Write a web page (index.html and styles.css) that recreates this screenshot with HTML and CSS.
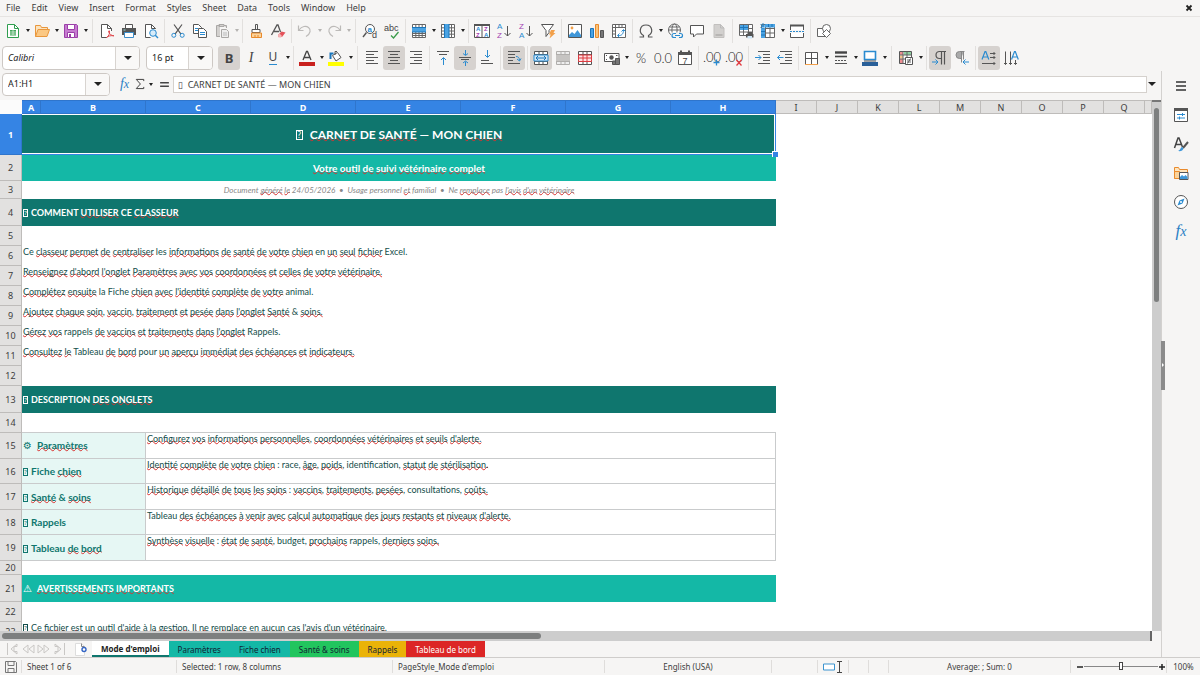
FILE: index.html
```html
<!DOCTYPE html>
<html lang="fr">
<head>
<meta charset="utf-8">
<title>Carnet de santé</title>
<link rel="stylesheet" href="styles.css">
</head>
<body>
<header class="menubar">
  <nav class="menus">
    <button>File</button><button>Edit</button><button>View</button><button>Insert</button><button>Format</button><button>Styles</button><button>Sheet</button><button>Data</button><button>Tools</button><button>Window</button><button>Help</button>
  </nav>
  <button class="close" aria-label="Close document"><svg viewBox="0 0 8 8" width="8" height="8"><path d="M1.5 1.5l5 5M6.5 1.5l-5 5" stroke="#222" stroke-width="1.8"/></svg></button>
</header>

<div class="toolbar" role="toolbar" aria-label="Standard">
  <div class="group wide">
    <button class="tool" aria-label="New"><svg viewBox="0 0 16 16"><path d="M2.500 1.500h7l4 4v9h-11z" fill="#fff" stroke="#2f9e4f"/><path d="M9.500 1.500v4h4" stroke="#2f9e4f"/><path d="M5 7h6v5.500H5z" fill="#43a85c"/><path d="M5 9h6M5 11h6M8 7v5" stroke="#fff" stroke-width=".6"/></svg></button><button class="caret" aria-label="New options"></button>
    <button class="tool" aria-label="Open"><svg viewBox="0 0 16 16"><path d="M1.500 13.500v-11h5l1 2h6v2" fill="#fce3bd" stroke="#e9973c"/><path d="M1.500 13.500l2.500-7h11.500l-2.500 7z" fill="#fbc883" stroke="#e9973c"/></svg></button><button class="caret" aria-label="Recent files"></button>
    <button class="tool" aria-label="Save"><svg viewBox="0 0 16 16"><path d="M1.500 1.500h12l1 1v12h-13z" fill="#c67bd0" stroke="#9b3fa8"/><path d="M4.500 1.500h7v5h-7z" fill="#fff" stroke="#9b3fa8"/><path d="M4.500 9.500h7v5h-7z" fill="#fff" stroke="#9b3fa8"/><path d="M6 11h2v3H6z" fill="#9b3fa8"/></svg></button><button class="caret" aria-label="Save options"></button>
  </div>
  <div class="group">
    <button class="tool" aria-label="Export as PDF"><svg viewBox="0 0 16 16"><path d="M12.500 8V5.500l-4-4h-6v13H8" fill="#fff" stroke="#555"/><path d="M8.500 1.500v4h4" stroke="#555"/><path d="M7.500 14.500c2-1 3.500-4 3-6.500-.3-1-1.200 0-.8 1 .8 2 2.800 3.800 5.300 3.800M7.500 14.500c1.500-1.500 4.500-2.200 7.500-1.700" stroke="#e0474c"/></svg></button>
    <button class="tool" aria-label="Print"><svg viewBox="0 0 16 16"><path d="M4.500 1.500h7v4h-7z" fill="#fff" stroke="#555"/><path d="M1 5h14v7H1z" fill="#555"/><path d="M3.500 9.500h9v5h-9z" fill="#fff" stroke="#3b8cc9"/><path d="M2.500 7h2" stroke="#9dd"/></svg></button>
    <button class="tool" aria-label="Print preview"><svg viewBox="0 0 16 16"><path d="M12.500 6V5.500l-4-4h-6v13h5" fill="#fff" stroke="#555"/><path d="M8.500 1.500v4h4" stroke="#555"/><circle cx="10" cy="10" r="3.300" fill="#d7ecfa" stroke="#2a8bd0"/><path d="M12.300 12.300l2.700 2.700" stroke="#2a8bd0" stroke-width="1.400"/></svg></button>
  </div>
  <div class="group">
    <button class="tool" aria-label="Cut"><svg viewBox="0 0 16 16"><path d="M4 1.500l6.800 9.300M12 1.500l-6.800 9.300" stroke="#555" stroke-width="1.200"/><circle cx="3.800" cy="12.300" r="2" stroke="#2a8bd0"/><circle cx="12.200" cy="12.300" r="2" stroke="#2a8bd0"/></svg></button>
    <button class="tool" aria-label="Copy"><svg viewBox="0 0 16 16"><path d="M1.500 1.500h5l3 3v6h-8z" fill="#fff" stroke="#555"/><path d="M3 5.500h3M3 7.500h3" stroke="#2a8bd0"/><path d="M6.500 5.500h5l3 3v6h-8z" fill="#fff" stroke="#555"/><path d="M8 9.500h5M8 11.500h5" stroke="#2a8bd0"/></svg></button>
    <button class="tool" aria-label="Paste" disabled><svg viewBox="0 0 16 16"><path d="M6 2.500H2.500v11H6M10 2.500h2.500V5M5 1.500h5v2H5z" fill="#d3d1cf" stroke="#aaa8a6"/><path d="M7.500 6.500h5l2 2v6h-7z" fill="#eee" stroke="#aaa8a6"/><path d="M9 10h4M9 12h4" stroke="#bbb"/></svg></button><button class="caret" aria-label="Paste options" disabled></button>
  </div>
  <div class="group">
    <button class="tool" aria-label="Clone formatting"><svg viewBox="0 0 16 16"><path d="M7.500 1.500h2v5h-2z" stroke="#555"/><path d="M4 6.500h8v3H4z" fill="#fff" stroke="#555"/><path d="M3.500 10v4.500h10V10z" fill="#fbd39b" stroke="#e98a2c"/><path d="M7 12v2M10 12v2" stroke="#e98a2c"/></svg></button>
    <button class="tool" aria-label="Clear formatting"><svg viewBox="0 0 16 16"><path d="M1.500 12L7 2h1l2.500 7M4 8.500h5" stroke="#555" stroke-width="1.300"/><path d="M8 12l3.500-3.500 4 1L12 14H8.500z" fill="#e4525a"/><path d="M8 12l1.500-1.500L12 13l-1 1.500H8.500z" fill="#f6b4b6"/></svg></button>
  </div>
  <div class="group wide">
    <button class="tool" aria-label="Undo" disabled><svg viewBox="0 0 16 16"><path d="M1.500 2.500v5h5M2 7c3-4 7-4.500 9.500-2.500s2.500 6-2.500 9" stroke="#bcbab8" stroke-width="1.200"/></svg></button><button class="caret" aria-label="Undo list" disabled></button>
    <button class="tool" aria-label="Redo" disabled><svg viewBox="0 0 16 16"><path d="M14.500 2.500v5h-5M14 7c-3-4-7-4.500-9.500-2.500s-2.500 6 2.500 9" stroke="#bcbab8" stroke-width="1.200"/></svg></button><button class="caret" aria-label="Redo list" disabled></button>
  </div>
  <div class="group">
    <button class="tool" aria-label="Find and replace"><svg viewBox="0 0 16 16"><circle cx="8" cy="6" r="4.500" fill="#fff" stroke="#555"/><path d="M4.500 9.500L1 14" stroke="#555" stroke-width="1.400"/><text x="5.600" y="8.500" font-size="8" font-weight="700" fill="#2a8bd0">a</text><text x="10" y="15" font-size="9" fill="#444">d</text></svg></button>
    <button class="tool" aria-label="Spelling"><svg viewBox="0 0 16 16"><text x="0" y="7.500" font-size="9" fill="#444">abc</text><path d="M7 12.500l2.500 2.500 5-6" stroke="#3a9b4a" stroke-width="1.300"/></svg></button>
  </div>
  <div class="group">
    <button class="tool" aria-label="Row"><svg viewBox="0 0 16 16"><path d="M1.500 1.500h13v13h-13zM1.500 10.500h13M4.800 1.500v13M8 1.500v13M11.200 1.500v13M1.500 12.500h13" fill="#fff" stroke="#666"/><path d="M1 5h14v4H1z" fill="#4ba3e3"/><path d="M1 4.500h14M1 9h14" stroke="#1b76bb"/></svg></button><button class="caret" aria-label="Row options"></button>
    <button class="tool" aria-label="Column"><svg viewBox="0 0 16 16"><path d="M1.500 1.500h13v13h-13zM11.500 1.500v13M1.500 4.800h13M1.500 8h13M1.500 11.200h13" fill="#fff" stroke="#666"/><path d="M5 1h4v14H5z" fill="#4ba3e3"/><path d="M4.500 1v14M9 1v14" stroke="#1b76bb"/></svg></button><button class="caret" aria-label="Column options"></button>
  </div>
  <div class="group">
    <button class="tool" aria-label="Sort"><svg viewBox="0 0 16 16"><path d="M.500 1.500h15v13H.500zM8 1.500v13" fill="#fff" stroke="#555"/><path d="M0 1h16v2H0z" fill="#555"/><g font-size="6" font-weight="700"><text x="2" y="8" fill="#2a8bd0">A</text><text x="2" y="14" fill="#a33db0">Z</text><text x="10" y="8" fill="#a33db0">Z</text><text x="10" y="14" fill="#2a8bd0">A</text></g></svg></button>
    <button class="tool" aria-label="Sort ascending"><svg viewBox="0 0 16 16"><g font-size="8"><text x="1" y="6" fill="#2a8bd0">A</text><text x="1" y="15" fill="#a33db0">Z</text></g><path d="M11.500 3v10M8.500 10l3 3 3-3" stroke="#555"/></svg></button>
    <button class="tool" aria-label="Sort descending"><svg viewBox="0 0 16 16"><g font-size="8"><text x="1" y="6" fill="#a33db0">Z</text><text x="1" y="15" fill="#2a8bd0">A</text></g><path d="M11.500 3v10M8.500 10l3 3 3-3" stroke="#555"/></svg></button>
    <button class="tool" aria-label="AutoFilter"><svg viewBox="0 0 16 16"><path d="M1.500 1.500h12L9 7.500v2l-3 4v-6z" fill="#fff" stroke="#555"/><path d="M11 7h4l-1.500 3h2L9.500 15.500l1.200-4H9z" fill="#f2a04a"/></svg></button>
  </div>
  <div class="group">
    <button class="tool" aria-label="Insert image"><svg viewBox="0 0 16 16"><path d="M1.500 1.500h13v13h-13z" fill="#fff" stroke="#555"/><path d="M2 14v-2l3-3 2.500 2 3-4 3.500 5v2z" fill="#3f97d9"/><circle cx="5" cy="5" r="1.400" fill="#f2a04a"/></svg></button>
    <button class="tool" aria-label="Insert chart"><svg viewBox="0 0 16 16"><path d="M1.500 5.500h3v9h-3z" fill="#4ba3e3" stroke="#1b76bb"/><path d="M6.500 1.500h3v13h-3z" fill="#f8c47c" stroke="#e98a2c"/><path d="M11.500 7.500h3v7h-3z" fill="#777" stroke="#555"/></svg></button>
    <button class="tool" aria-label="Insert pivot table"><svg viewBox="0 0 16 16"><path d="M1.500 1.500h13v13h-13zM1.500 4.500h13M4.500 1.500v13M8 1.500v3M11 1.500v3M1.500 8h3M1.500 11h3" fill="#fff" stroke="#666"/><path d="M7 12.500c4 .5 5.500-2 5.500-5.500M10.500 8.500l2-2 2 2M8.500 10.500l-2 2 2 2" stroke="#2a8bd0"/></svg></button>
  </div>
  <div class="group">
    <button class="tool" aria-label="Special character"><svg viewBox="0 0 16 16"><path d="M1.500 14h4v-1.500C3 11 2 9 2.300 6.800 2.700 4 5 2 8 2s5.300 2 5.700 4.800C14 9 13 11 10.500 12.500V14h4" stroke="#555" stroke-width="1.200"/></svg></button><button class="caret" aria-label="Recent characters"></button>
    <button class="tool" aria-label="Hyperlink"><svg viewBox="0 0 16 16"><circle cx="7.500" cy="7" r="6" stroke="#666" fill="#fff"/><ellipse cx="7.500" cy="7" rx="2.600" ry="6" stroke="#666"/><path d="M1.500 7h12M2.500 4h10" stroke="#666"/><path d="M4 9.500h12v6H4z" fill="#f5f4f2"/><path d="M9 10.500H7a2 2 0 000 4h2M12 10.500h1.500a2 2 0 010 4H12M8 12.500h5" stroke="#2a8bd0" stroke-width="1.200"/></svg></button>
    <button class="tool" aria-label="Comment"><svg viewBox="0 0 16 16"><path d="M1.500 2.500h13v8.500h-7L4.500 14v-3h-3z" fill="#fff" stroke="#555"/></svg></button>
    <button class="tool" aria-label="Headers and footers" disabled><svg viewBox="0 0 16 16"><path d="M3 1.500h6.500l3.500 3.500v9.500H3z" fill="#d2d0ce" stroke="#c2c0be"/><path d="M4.500 11h7v2h-7z" fill="#b8b6b4"/><path d="M9.500 1.500v3.500H13" stroke="#bbb"/></svg></button>
  </div>
  <div class="group">
    <button class="tool" aria-label="Define print area"><svg viewBox="0 0 16 16"><path d="M1.500 1.500h13v11h-13zM1.500 5.500h13M1.500 9h13M5.500 1.500v11M10.500 1.500v11" fill="#fff" stroke="#666"/><path d="M2 2h8v5H2z" fill="#4ba3e3"/><path d="M2 4.500h8M5.500 2v5" stroke="#1b76bb"/><path d="M8 11h7.500v3.500H8zM9.500 9h4.500v2H9.500z" fill="#555"/><path d="M9.500 13h4.500v2.500H9.500z" fill="#cfe6f7"/></svg></button>
    <button class="tool" aria-label="Freeze rows and columns"><svg viewBox="0 0 16 16"><path d="M1.500 1.500h13v13h-13zM1.500 5.500h13M1.500 10h13M5.500 1.500v13M10 1.500v13" fill="#fff" stroke="#666"/><path d="M1 5h4v10H1zM5 1h10v3.500H5z" fill="#4ba3e3"/><path d="M1 8.500h4M1 12h4M8.500 1v3M12 1v3" stroke="#1b76bb"/><path d="M3 0v6M.500 1.500l5 3M5.500 1.500l-5 3" stroke="#2a8bd0"/></svg></button><button class="caret" aria-label="Freeze options"></button>
    <button class="tool" aria-label="Split window"><svg viewBox="0 0 16 16"><path d="M1.500 7V2.500h13V7M1.500 10v4.500h13V10" fill="#fff" stroke="#555"/><path d="M1 1.500h14v2H1z" fill="#555"/><path d="M1 8.500h14" stroke="#2a8bd0" stroke-dasharray="2 1"/></svg></button>
  </div>
  <div class="group last">
    <button class="tool" aria-label="Show draw functions"><svg viewBox="0 0 16 16"><path d="M1.500 5.500h8v8h-8z" fill="#fff" stroke="#666"/><circle cx="10.500" cy="5.500" r="4" fill="#fff" stroke="#666"/><path d="M10.500 6.500l4 4-4 4-4-4z" fill="#fff" stroke="#666"/></svg></button>
  </div>
</div>

<div class="toolbar" role="toolbar" aria-label="Formatting">
  <div class="combo font-name"><input aria-label="Font name" value="Calibri"><button aria-label="Choose font"></button></div>
  <div class="combo font-size"><input aria-label="Font size" value="16 pt"><button aria-label="Choose size"></button></div>
  <div class="group">
    <button class="tool on" aria-label="Bold" aria-pressed="true"><b class="glyph">B</b></button>
    <button class="tool" aria-label="Italic"><i class="glyph serif">I</i></button>
    <button class="tool" aria-label="Underline"><span class="glyph under">U</span></button><button class="caret" aria-label="Underline styles"></button>
  </div>
  <div class="group wide">
    <button class="tool" aria-label="Font color"><svg viewBox="0 0 16 16"><path d="M4 10L7.500 1.500h1L12 10M5.300 7.500h5.400" stroke="#444" stroke-width="1.300"/><path d="M0 12h16v4H0z" fill="#c9211e"/></svg></button><button class="caret" aria-label="Font colors"></button>
    <button class="tool" aria-label="Background color"><svg viewBox="0 0 16 16"><path d="M2.500 9V3.500h3" stroke="#1b76bb" stroke-width="2"/><path d="M4.500 5.500l5-3 3.500 5-5 3.500z" fill="#fff" stroke="#555"/><path d="M7 5V1.500h2" stroke="#555"/><path d="M0 12h16v4H0z" fill="#ff0"/></svg></button><button class="caret" aria-label="Background colors"></button>
  </div>
  <div class="group">
    <button class="tool" aria-label="Align left"><svg viewBox="0 0 16 16"><path d="M2 1.500h12M2 4.500h8M2 7.500h12M2 10.500h8M2 13.500h12" stroke="#555"/></svg></button>
    <button class="tool on" aria-label="Center" aria-pressed="true"><svg viewBox="0 0 16 16"><path d="M2 1.500h12M4 4.500h8M2 7.500h12M4 10.500h8M2 13.500h12" stroke="#555"/></svg></button>
    <button class="tool" aria-label="Align right"><svg viewBox="0 0 16 16"><path d="M2 1.500h12M6 4.500h8M2 7.500h12M6 10.500h8M2 13.500h12" stroke="#555"/></svg></button>
  </div>
  <div class="group">
    <button class="tool" aria-label="Align top"><svg viewBox="0 0 16 16"><path d="M2 1.500h12M4 4.500h8" stroke="#555"/><path d="M8.500 15V8M6 10l2.500-2.500L11 10" stroke="#2a8bd0"/></svg></button>
    <button class="tool on" aria-label="Center vertically" aria-pressed="true"><svg viewBox="0 0 16 16"><path d="M2 7.500h12M4 9.500h8" stroke="#555"/><path d="M8.500 0v5M6 3.500l2.500 2 2.500-2M8.500 16v-4.500M6 13l2.500-2 2.500 2" stroke="#2a8bd0"/></svg></button>
    <button class="tool" aria-label="Align bottom"><svg viewBox="0 0 16 16"><path d="M2 13.500h12M2 10.500h8" stroke="#555"/><path d="M8.500 0v7M6 5l2.500 2.500L11 5" stroke="#2a8bd0"/></svg></button>
  </div>
  <div class="group">
    <button class="tool on" aria-label="Wrap text" aria-pressed="true"><svg viewBox="0 0 16 16"><path d="M2 1.500h12M2 4.500h7M2 7.500h7M2 10.500h5M2 13.500h12" stroke="#555"/><path d="M10 6.500c2 0 3.500 1 3.500 4M11 9l2.500 2 1.500-2.500" stroke="#2a8bd0"/></svg></button>
  </div>
  <div class="group">
    <button class="tool on" aria-label="Merge and center" aria-pressed="true"><svg viewBox="0 0 16 16"><path d="M1.500 1.500h13v13h-13zM1.500 4.500h13M1.500 11.500h13M6 1.500v3M10 1.500v3M6 11.500v3M10 11.500v3" fill="#fff" stroke="#555"/><path d="M1 5h14v6H1z" fill="#cfe6f7" stroke="#2a8bd0"/><path d="M3 8h10M5 6L3 8l2 2M11 6l2 2-2 2" stroke="#1b76bb"/></svg></button>
    <button class="tool" aria-label="Merge cells" disabled><svg viewBox="0 0 16 16"><path d="M1.500 1.500h13v13h-13zM1.500 4.500h13M1.500 11.500h13M6 1.500v3M10 1.500v3M6 11.500v3M10 11.500v3" fill="#eee" stroke="#b0aeac"/><path d="M1 5h14v6H1z" fill="#c6c4c2"/></svg></button>
    <button class="tool" aria-label="Unmerge cells"><svg viewBox="0 0 16 16"><path d="M1.500 1.500h13v13h-13zM1.500 4.500h13M1.500 11.500h13M6 1.500v3M10 1.500v3M6 11.500v3M10 11.500v3" fill="#fff" stroke="#555"/><path d="M1.500 5h13v6.500h-13zM6 5v6M10 5v6M1.500 8h13" fill="#fde3e3" stroke="#dc3b41"/></svg></button>
  </div>
  <div class="group">
    <button class="tool" aria-label="Currency"><svg viewBox="0 0 16 16"><path d="M.500 3.500h14.500v8H.500z" fill="#fff" stroke="#555"/><circle cx="7.500" cy="7.500" r="2.200" fill="#555"/><path d="M2 5.500h1M2 9.500h1M12 5.500h1.500" stroke="#555"/><path d="M8.500 11h3v3.500h-3zM11.500 8.500h4v6h-4z" fill="#777" stroke="#555"/></svg></button><button class="caret" aria-label="Currency formats"></button>
    <button class="tool" aria-label="Percent"><span class="glyph light">%</span></button>
    <button class="tool" aria-label="Number"><span class="glyph light">0.0</span></button>
    <button class="tool" aria-label="Date"><svg viewBox="0 0 16 16"><path d="M1.500 2.500h13v12h-13z" fill="#fff" stroke="#555"/><path d="M1 2h14v3H1zM3 .500h2V3H3zM11 .500h2V3h-2z" fill="#555"/><text x="5.500" y="13.500" font-size="9" fill="#444">7</text></svg></button>
  </div>
  <div class="group wide">
    <button class="tool" aria-label="Add decimal place"><svg viewBox="0 0 16 16"><text class="digits" x="-1" y="12" font-size="13">.00</text><path d="M12.500 9.500v6M9.500 12.500h6" stroke="#2a8bd0" stroke-width="1.300"/></svg></button>
    <button class="tool" aria-label="Delete decimal place"><svg viewBox="0 0 16 16"><text class="digits" x="-1" y="12" font-size="13">.00</text><path d="M10.500 10l5 5.500M15.500 10l-5 5.500" stroke="#e23b41" stroke-width="1.300"/></svg></button>
  </div>
  <div class="group">
    <button class="tool" aria-label="Increase indent"><svg viewBox="0 0 16 16"><path d="M3 1.500h12M8 4.500h7M8 7.500h7M8 10.500h7M3 13.500h12" stroke="#555"/><path d="M0 7.500h6M3.500 5L6 7.500 3.500 10" stroke="#2a8bd0"/></svg></button>
    <button class="tool" aria-label="Decrease indent"><svg viewBox="0 0 16 16"><path d="M3 1.500h12M8 4.500h7M8 7.500h7M8 10.500h7M3 13.500h12" stroke="#555"/><path d="M.500 7.500h6M3 5L.500 7.500 3 10" stroke="#2a8bd0"/></svg></button>
  </div>
  <div class="group wide">
    <button class="tool" aria-label="Borders"><svg viewBox="0 0 16 16"><path d="M1.500 2.500h12v12h-12zM7.500 2.500v12M1.500 8.500h12" fill="#fff" stroke="#555"/><path d="M1 14.500h13" stroke="#f2a04a"/></svg></button><button class="caret" aria-label="Border choices"></button>
    <button class="tool" aria-label="Border style"><svg viewBox="0 0 16 16"><path d="M2 2.500h12" stroke="#444" stroke-width="2.400"/><path d="M2 6.500h12" stroke="#444" stroke-width="1.600"/><path d="M2 10.500h12" stroke="#555" stroke-dasharray="2 1"/><path d="M2 13.500h12" stroke="#555"/></svg></button><button class="caret" aria-label="Border styles"></button>
    <button class="tool" aria-label="Border color"><svg viewBox="0 0 16 16"><path d="M2.500 1.500h11v8h-11z" fill="#fff" stroke="#2a8bd0" stroke-width="1.600"/><path d="M2 11h12" stroke="#555"/><path d="M0 12h16v4H0z" fill="#2a6099"/></svg></button><button class="caret" aria-label="Border colors"></button>
  </div>
  <div class="group">
    <button class="tool" aria-label="Conditional formatting"><svg viewBox="0 0 16 16"><path d="M1.500 1.500h12v12h-12z" fill="#fff" stroke="#555"/><path d="M2 2h3v3H2zM2 9h3v4H2z" fill="#ee8f93"/><path d="M6 2h7v3H6z" fill="#8fd0a0"/><path d="M2 5.500h3v3H2z" fill="#f7c48d"/><path d="M1.500 5h12M1.500 9h12M5 1.500v12M9 1.500v12" stroke="#666"/><path d="M7.500 7.500h7v7h-7z" fill="#fff" stroke="#555"/><path d="M9 10h4M9 12h4M12.500 8.500l-3 5" stroke="#444" stroke-width=".8"/></svg></button><button class="caret" aria-label="Conditional options"></button>
  </div>
  <div class="group">
    <button class="tool on" aria-label="Left to right" aria-pressed="true"><svg viewBox="0 0 16 16"><path d="M14 1.500H7.500a3.500 3.500 0 000 7H9M9.500 1.500v13M12.500 1.500v13" stroke="#555" stroke-width="1.200"/><path d="M0 12h6M3.500 9.500L6 12l-2.500 2.500" stroke="#2a8bd0"/></svg></button>
    <button class="tool" aria-label="Right to left"><svg viewBox="0 0 16 16"><path d="M10 1.500H5.500a3.500 3.500 0 000 7H7z" fill="#aaa"/><path d="M10.500 1.500h-5a3.500 3.500 0 000 7H7M7.500 1.500v11M9.500 1.500v8" stroke="#888"/><path d="M9 12h6M11.500 9.500L9 12l2.500 2.500" stroke="#2a8bd0"/></svg></button>
  </div>
  <div class="group last">
    <button class="tool on" aria-label="Text left to right" aria-pressed="true"><svg viewBox="0 0 16 16"><path d="M1 9.500L4 1.500h.8l3 8M2 7h4.800" stroke="#2a8bd0" stroke-width="1.200"/><path d="M9 3.500h5M9 7.500h5M1 13.500h13M12.500 2l1.500 1.500L12.500 5M12.500 6L14 7.500 12.500 9M12.500 12l1.500 1.500-1.500 1.500" stroke="#555"/></svg></button>
    <button class="tool" aria-label="Text top to bottom"><svg viewBox="0 0 16 16"><path d="M8.500 9.500l3-8h.8l3 8M9.500 7h4.800" stroke="#2a8bd0" stroke-width="1.200"/><path d="M2.500 1.500v13M7.500 1.500v13M12.500 10v4.500M1 13l1.500 1.500L4 13M6 13l1.500 1.500L9 13M11 13l1.500 1.500L14 13" stroke="#555"/></svg></button>
  </div>
</div>

<main class="work">
  <section class="document">
    <div class="formula-bar">
      <div class="combo name-box"><input aria-label="Name box" value="A1:H1"><button aria-label="Choose range"></button></div>
      <button class="fx" aria-label="Function wizard"><i>f<small>x</small></i></button>
      <button class="sigma" aria-label="Select function"><svg viewBox="0 0 12 14" width="10" height="12"><path d="M10.500 3.500v-2H1.500L6.500 7l-5 5.500h9v-2" stroke="#444" stroke-width="1.200"/></svg></button><button class="caret" aria-label="Functions"></button>
      <button class="equals" aria-label="Formula"><svg viewBox="0 0 10 8" width="9" height="7"><path d="M0 2h10M0 6h10" stroke="#444" stroke-width="1.800"/></svg></button>
      <input class="formula" aria-label="Input line" value="▯  CARNET DE SANTÉ — MON CHIEN">
      <button class="expand" aria-label="Expand formula bar"></button>
    </div>
    <div class="sheet-area">
      <div class="sheet-view">
        <table class="sheet">
          <colgroup><col class="c-head"><col class="c-a"><col class="c-main" span="7"><col class="c-std" span="9"><col></colgroup>
          <thead><tr><th class="corner"></th><th class="sel">A</th><th class="sel">B</th><th class="sel">C</th><th class="sel">D</th><th class="sel">E</th><th class="sel">F</th><th class="sel">G</th><th class="sel">H</th><th>I</th><th>J</th><th>K</th><th>L</th><th>M</th><th>N</th><th>O</th><th>P</th><th>Q</th><th></th></tr></thead>
          <tbody>
            <tr class="h41"><th class="sel">1</th><td class="title" colspan="8"><span class="tofu">?</span><u>CARNET</u> DE <u>SANTÉ</u> — MON <u>CHIEN</u></td></tr>
            <tr class="h26"><th>2</th><td class="subtitle" colspan="8"><u>Votre</u> <u>outil</u> <u>de</u> <u>suivi</u> <u>vétérinaire</u> <u>complet</u></td></tr>
            <tr class="h18"><th>3</th><td class="note" colspan="8">Document <u>généré</u> <u>le</u> 24/05/2026 &nbsp;•&nbsp; Usage personnel <u>et</u> familial &nbsp;•&nbsp; Ne <u>remplace</u> pas <u>l'avis</u> <u>d'un</u> <u>vétérinaire</u></td></tr>
            <tr class="h27"><th>4</th><td class="band" colspan="8"><span class="tofu">?</span>COMMENT <u>UTILISER</u> CE <u>CLASSEUR</u></td></tr>
            <tr class="h20"><th>5</th><td colspan="8"></td></tr>
            <tr class="h20"><th>6</th><td colspan="8">Ce <u>classeur</u> <u>permet</u> <u>de</u> <u>centraliser</u> les <u>informations</u> <u>de</u> <u>santé</u> <u>de</u> <u>votre</u> <u>chien</u> en <u>un</u> <u>seul</u> <u>fichier</u> Excel.</td></tr>
            <tr class="h20"><th>7</th><td colspan="8"><u>Renseignez</u> <u>d'abord</u> <u>l'onglet</u> <u>Paramètres</u> <u>avec</u> <u>vos</u> <u>coordonnées</u> <u>et</u> <u>celles</u> <u>de</u> <u>votre</u> <u>vétérinaire.</u></td></tr>
            <tr class="h20"><th>8</th><td colspan="8"><u>Complétez</u> <u>ensuite</u> la Fiche <u>chien</u> <u>avec</u> <u>l'identité</u> <u>complète</u> <u>de</u> <u>votre</u> animal.</td></tr>
            <tr class="h20"><th>9</th><td colspan="8"><u>Ajoutez</u> <u>chaque</u> <u>soin</u>, <u>vaccin</u>, <u>traitement</u> <u>et</u> <u>pesée</u> <u>dans</u> <u>l'onglet</u> <u>Santé</u> &amp; <u>soins.</u></td></tr>
            <tr class="h20"><th>10</th><td colspan="8"><u>Gérez</u> <u>vos</u> rappels <u>de</u> <u>vaccins</u> <u>et</u> <u>traitements</u> <u>dans</u> <u>l'onglet</u> Rappels.</td></tr>
            <tr class="h20"><th>11</th><td colspan="8"><u>Consultez</u> <u>le</u> Tableau <u>de</u> <u>bord</u> pour <u>un</u> <u>aperçu</u> <u>immédiat</u> <u>des</u> <u>échéances</u> <u>et</u> <u>indicateurs.</u></td></tr>
            <tr class="h20"><th>12</th><td colspan="8"></td></tr>
            <tr class="h27"><th>13</th><td class="band" colspan="8"><span class="tofu">?</span>DESCRIPTION <u>DES</u> <u>ONGLETS</u></td></tr>
            <tr class="h20"><th>14</th><td class="above-box" colspan="8"></td></tr>
            <tr class="h26"><th>15</th><td class="label" colspan="2"><span class="symbol">⚙</span><u>Paramètres</u></td><td class="desc" colspan="6"><u>Configurez</u> <u>vos</u> <u>informations</u> <u>personnelles</u>, <u>coordonnées</u> <u>vétérinaires</u> <u>et</u> <u>seuils</u> <u>d'alerte.</u></td></tr>
            <tr class="h25"><th>16</th><td class="label" colspan="2"><span class="tofu">?</span>Fiche <u>chien</u></td><td class="desc" colspan="6"><u>Identité</u> <u>complète</u> <u>de</u> <u>votre</u> <u>chien</u> : race, <u>âge</u>, <u>poids</u>, identification, <u>statut</u> <u>de</u> <u>stérilisation.</u></td></tr>
            <tr class="h26"><th>17</th><td class="label" colspan="2"><span class="tofu">?</span><u>Santé</u> &amp; <u>soins</u></td><td class="desc" colspan="6"><u>Historique</u> <u>détaillé</u> <u>de</u> <u>tous</u> <u>les</u> <u>soins</u> : <u>vaccins</u>, <u>traitements</u>, <u>pesées</u>, consultations, <u>coûts.</u></td></tr>
            <tr class="h25"><th>18</th><td class="label" colspan="2"><span class="tofu">?</span>Rappels</td><td class="desc" colspan="6">Tableau <u>des</u> <u>échéances</u> <u>à</u> <u>venir</u> <u>avec</u> <u>calcul</u> <u>automatique</u> <u>des</u> <u>jours</u> <u>restants</u> <u>et</u> <u>niveaux</u> <u>d'alerte.</u></td></tr>
            <tr class="h26"><th>19</th><td class="label" colspan="2"><span class="tofu">?</span>Tableau <u>de</u> <u>bord</u></td><td class="desc" colspan="6"><u>Synthèse</u> <u>visuelle</u> : <u>état</u> <u>de</u> <u>santé</u>, budget, <u>prochains</u> rappels, <u>derniers</u> <u>soins.</u></td></tr>
            <tr class="h14"><th>20</th><td colspan="8"></td></tr>
            <tr class="h27"><th>21</th><td class="band light" colspan="8"><span class="symbol">⚠</span><u>AVERTISSEMENTS</u> <u>IMPORTANTS</u></td></tr>
            <tr class="h20"><th>22</th><td colspan="8"></td></tr>
            <tr class="h20"><th>23</th><td colspan="8"><span class="tofu">?</span>Ce <u>fichier</u> <u>est</u> <u>un</u> <u>outil</u> <u>d'aide</u> <u>à</u> <u>la</u> <u>gestion.</u> <u>Il</u> <u>ne</u> <u>remplace</u> en <u>aucun</u> <u>cas</u> <u>l'avis</u> <u>d'un</u> <u>vétérinaire.</u></td></tr>
          </tbody>
        </table>
      </div>
      <div class="vscroll"><div class="thumb"></div></div>
      <div class="hscroll"><div class="thumb"></div></div>
    </div>
    <div class="tabs">
      <div class="tab-nav">
        <button aria-label="First sheet" disabled><svg viewBox="0 0 14 12"><path d="M2.500 0v12M12 1L6 6l6 5V8.500H9v-5h3z"/></svg></button>
        <button aria-label="Previous sheet" disabled><svg viewBox="0 0 14 12"><path d="M7 2L2 6l5 4zM13 2L8 6l5 4z"/></svg></button>
        <button aria-label="Next sheet" disabled><svg viewBox="0 0 14 12"><path d="M1 2l5 4-5 4zM7 2l5 4-5 4z"/></svg></button>
        <button aria-label="Last sheet" disabled><svg viewBox="0 0 14 12"><path d="M11.500 0v12M2 1l6 5-6 5V8.500h3v-5H2z"/></svg></button>
      </div>
      <button class="add-sheet" aria-label="Add sheet"><svg viewBox="0 0 14 14" width="14" height="14"><path d="M1.500 1.500h6l3 3v9h-9z" fill="#fff" stroke="#ddd"/><path d="M7.500 1.500v3h3" stroke="#888"/><circle cx="10" cy="7.500" r="2" fill="#fff" stroke="#3465c4" stroke-width="1.400"/></svg></button>
      <button class="tab active">Mode d'emploi</button><button class="tab teal">Paramètres</button><button class="tab teal">Fiche chien</button><button class="tab green">Santé &amp; soins</button><button class="tab amber">Rappels</button><button class="tab red">Tableau de bord</button>
    </div>
  </section>
  <aside class="sidebar">
    <button class="handle" aria-label="Toggle sidebar"></button>
    <button aria-label="Sidebar settings"><svg viewBox="0 0 16 16"><path d="M3 4h10M3 8h10M3 12h10" stroke="#333" stroke-width="1.500"/></svg></button>
    <button aria-label="Properties"><svg viewBox="0 0 16 16"><path d="M1.500 1.500h13v13h-13z" fill="#fff" stroke="#555"/><path d="M1 1h14v3H1z" fill="#555"/><path d="M4 7.500h8M4 11h8M9.500 6v3M6.500 9.500v3" stroke="#2a8bd0"/></svg></button>
    <button aria-label="Styles"><svg viewBox="0 0 16 16"><path d="M1.500 12L5 2h1l3.500 9M3 8.500h5" stroke="#444" stroke-width="1.500"/><path d="M15 6l-5 6" stroke="#555" stroke-width="2"/><path d="M5 15c3 .5 5-.5 5.500-2.500L9 11c-1.500.5-1.500 3-4 4z" fill="#3f97d9"/></svg></button>
    <button aria-label="Gallery"><svg viewBox="0 0 16 16"><path d="M1.500 13.500v-11h4l1 2h8v3" fill="#fde4bd" stroke="#e98a2c"/><path d="M1.500 13.500V6.500h5v7z" fill="#fbd39b" stroke="#e98a2c"/><path d="M6.500 7.500h8.500v7H6.500z" fill="#fff" stroke="#555"/><path d="M7 14v-2l2-2 2 1.500 1.500-1.500 2 2v2z" fill="#3f97d9"/></svg></button>
    <button aria-label="Navigator"><svg viewBox="0 0 16 16"><circle cx="8" cy="8" r="6.500" fill="#fff" stroke="#555"/><path d="M11.500 4.500L9.500 9.500l-5 2 2-5z" fill="#2a8bd0"/><circle cx="8" cy="8" r="1" fill="#fff"/></svg></button>
    <button class="fx" aria-label="Functions"><i>f<small>x</small></i></button>
  </aside>
</main>

<footer class="status">
  <span class="cell center"><svg viewBox="0 0 12 12" width="12" height="12"><path d="M.500.500h10l1 1v10H.500zM3 .500h6v4H3zM3 7.500h6v4H3z" stroke="#777"/></svg></span>
  <span class="cell">Sheet 1 of 6</span>
  <span class="cell">Selected: 1 row, 8 columns</span>
  <span class="cell">PageStyle_Mode d'emploi</span>
  <span class="cell center">English (USA)</span>
  <span class="cell"></span>
  <span class="cell center"><svg viewBox="0 0 20 12" width="20" height="12"><path d="M.500 3h11v6H.500z" fill="#fff" stroke="#3b93cf"/><path d="M14 .500h5M16.500 1v10M14 11.500h5" stroke="#444"/></svg></span>
  <span class="cell"></span>
  <span class="cell"></span>
  <span class="cell center">Average: ; Sum: 0</span>
  <span class="cell zoom"><button aria-label="Zoom out"><svg viewBox="0 0 8 8" width="8" height="8"><path d="M1 4h6" stroke="#222" stroke-width="1.500"/></svg></button><input type="range" min="0" max="100" value="50" aria-label="Zoom"><button aria-label="Zoom in"><svg viewBox="0 0 8 8" width="8" height="8"><path d="M1 4h6M4 1v6" stroke="#222" stroke-width="1.500"/></svg></button></span>
  <span class="cell center">100%</span>
</footer>
</body>
</html>
```
FILE: styles.css
```css
* { box-sizing: border-box; }
body {
  margin: 0;
  height: 100vh;
  display: flex;
  flex-direction: column;
  overflow: hidden;
  background: #f6f5f4;
  color: #3d3d3d;
  font: 9px/12px "Noto Sans", sans-serif;
}
button, input { font: inherit; color: inherit; margin: 0; padding: 0; border: 0; background: none; }
svg { display: block; fill: none; overflow: visible; }
svg text { font-family: "Liberation Sans", sans-serif; }

.menubar { flex: none; height: 17px; display: flex; align-items: center; justify-content: space-between; padding: 0 7px 0 6px; border-bottom: 1px solid #e6e4e2; }
.menus { display: flex; gap: 11px; }

.toolbar { flex: none; height: 27px; display: flex; align-items: center; padding-left: 2px; }
.group { display: flex; align-items: center; padding-right: 2px; margin-right: 2px; border-right: 1px solid #e2e0de; }
.group.wide { padding-right: 3px; margin-right: 3px; }
.group.last { border-right: 0; }
.tool { width: 22px; height: 24px; display: grid; place-items: center; border-radius: 3px; }
.tool svg { width: 16px; height: 16px; }
.tool.on { background: #d6d2cf; }
.caret { width: 7px; height: 12px; display: grid; place-items: center; }
.caret::before, .combo button::before, .expand::before { content: ""; border: 2px solid transparent; border-top: 3px solid #222; border-bottom: 0; }
.caret:disabled::before { border-top-color: #b5b3b1; }
.glyph { font-size: 13px; line-height: 16px; color: #444; }
.glyph.serif { font-family: "Liberation Serif", serif; font-size: 14px; }
.glyph.under { border-bottom: 1px solid #2a8bd0; line-height: 14px; font-size: 12px; }
.glyph.light { font-family: Lato, sans-serif; font-weight: 300; color: #222; }
svg .digits { font-family: Lato, sans-serif; font-weight: 300; fill: #222; }

.combo { display: flex; height: 24px; background: #fff; border: 1px solid #cdc8c4; border-radius: 4px; overflow: hidden; }
.combo input { flex: 1; min-width: 0; padding-left: 5px; color: #222; }
.combo button { width: 24px; display: grid; place-items: center; background: #f9f8f7; border-left: 1px solid #d8d4d0; }
.combo button::before, .expand::before { border-width: 4px 4px 0; }
.font-name { width: 138px; margin-right: 6px; }
.font-name input { font-style: italic; }
.font-size { width: 67px; margin-right: 5px; }

.work { flex: 1; min-height: 0; display: flex; border-bottom: 1px solid #cfcdcb; }
.document { flex: 1; min-width: 0; display: flex; flex-direction: column; border-right: 1px solid #d3d1cf; }
.formula-bar { flex: none; height: 29px; display: flex; align-items: center; padding: 0 4px 3px 2px; }
.name-box { width: 108px; margin-right: 7px; height: 23px; }
.fx { color: #2a7fc4; font: 14px/16px "Liberation Serif", serif; }
.fx small { font-size: 12px; }
.formula-bar .fx { width: 15px; }
.sigma { width: 15px; padding-left: 3px; }
.equals { width: 9px; margin: 0 4px 0 6px; }
.formula { flex: 1; min-width: 0; height: 17px; padding-left: 4px; background: #fff; border: 1px solid #d5d1cd; }
.expand { width: 10px; display: grid; place-items: center; }

.sheet-area { flex: 1; min-height: 0; display: grid; grid-template: minmax(0, 1fr) 10px / minmax(0, 1fr) 9px; }
.sheet-view { overflow: hidden; background: #fff; }
.sheet { width: 100%; table-layout: fixed; border-collapse: separate; border-spacing: 0; }
.c-head { width: 22px; }
.c-a { width: 19px; }
.c-main { width: 105px; }
.c-std { width: 41px; }
.sheet th { padding: 1px 0 0; font-weight: 400; background: #e2e1e0; border: 0 solid #bebcba; border-width: 0 1px 1px 0; }
.sheet thead th { height: 14px; padding: 0; line-height: 11px; border-top-width: 1px; }
.sheet thead .corner { background: #fbfbfb; border-color: #fbfbfb; }
.sheet th.sel { background: #3584e4; color: #fff; font-weight: 700; border-color: #2f75cc; }
.sheet td { padding: 0 1px; vertical-align: top; white-space: nowrap; font-family: Lato, sans-serif; color: #134e4a; }
.sheet u { text-decoration: underline wavy #d8322f 1px; text-decoration-skip-ink: none; text-underline-offset: -2px; }
.h14 { height: 14px; } .h18 { height: 18px; } .h20 { height: 20px; } .h25 { height: 25px; }
.h26 { height: 26px; } .h27 { height: 27px; } .h41 { height: 41px; }
.tofu { display: inline-block; width: 5px; height: 8px; margin-right: 3px; border: 1px solid; font: 6px/6px "Noto Sans", sans-serif; text-align: center; vertical-align: 1px; }
.sheet .title, .sheet .subtitle, .sheet .band { color: #fff; font-weight: 700; vertical-align: middle; background: #0f766e; }
.sheet .title { position: relative; text-align: center; font-size: 12px; line-height: 16px; box-shadow: inset -1px -1px #3584e4, inset -2px -2px #fff, inset 0 1px #fff; }
.title::after { content: ""; position: absolute; right: -2px; bottom: -2px; width: 5px; height: 5px; background: #3584e4; border: 1px solid #fff; border-width: 1px 0 0 1px; }
.title .tofu { width: 7px; height: 10px; margin-right: 7px; font-size: 8px; line-height: 8px; }
.sheet .subtitle { text-align: center; font-size: 10px; background: #14b8a6; }
.sheet .note { text-align: center; font-style: italic; font-size: 8px; color: #888; vertical-align: middle; }
.sheet .band.light { background: #14b8a6; }
.sheet .above-box { border-bottom: 1px solid #c9cbcc; }
.sheet .label { vertical-align: middle; font-size: 10px; font-weight: 700; color: #0f766e; background: #e6f7f4; border: 0 solid #c9cbcc; border-width: 0 1px 1px 0; }
.sheet .desc { border: 0 solid #c9cbcc; border-width: 0 1px 1px 0; }
.symbol { margin-right: 5px; font: 400 10px/12px "DejaVu Sans", sans-serif; }

.vscroll, .hscroll { background: #cdcdcd; }
.vscroll { padding: 6px 2px 0; border-top: 2px solid #777; }
.vscroll .thumb { height: 37%; border-radius: 3px; background: #7d7f7f; }
.hscroll { padding: 2px 1px 2px 2px; border-right: 2px solid #666; }
.hscroll .thumb { width: 47%; height: 6px; border-radius: 3px; background: #7d7f7f; }

.tabs { flex: none; height: 16px; display: flex; font-size: 8px; }
.tab-nav { display: flex; padding: 0 5px; align-items: center; }
.tab-nav button { width: 16px; }
.tab-nav svg { width: 14px; height: 12px; stroke: #c9c7c5; }
.add-sheet { width: 18px; }
.tab { padding: 0 9px; line-height: 15px; color: #123; }
.tab.active { background: #fff; color: #222; font-weight: 700; border-bottom: 2px solid #0f766e; }
.teal { background: #14b8a6; } .green { background: #22c55e; } .amber { background: #eab308; }
.tab.red { background: #dc2626; color: #fff; }

.sidebar { position: relative; flex: none; width: 38px; display: flex; flex-direction: column; align-items: center; gap: 9px; padding-top: 5px; }
.sidebar button:not(.handle) { height: 20px; display: grid; place-items: center; }
.sidebar svg { width: 16px; height: 16px; }
.sidebar .fx { font-size: 17px; }
.sidebar .fx small { font-size: 14px; }
.handle { position: absolute; left: -1px; top: 46%; width: 4px; height: 49px; background: #8b8b8b; display: grid; place-items: center; }
.handle::before { content: ""; border: 2px solid transparent; border-left-color: #fff; border-right: 0; }

.status { flex: none; height: 17px; display: grid; grid-template-columns: 22px 155fr 216fr 212fr 167fr 46fr 31px 20px 20px 182fr 96px 33px; align-items: center; font-size: 8px; }
.cell { height: 13px; padding-left: 5px; display: flex; align-items: center; border-right: 1px solid #dfdddb; white-space: nowrap; }
.cell:last-child { border: 0; }
.cell.center { justify-content: center; padding: 0; }
.zoom input { flex: 1; min-width: 0; height: 10px; appearance: none; }
.zoom input::-webkit-slider-runnable-track { height: 1px; background: #888; }
.zoom input::-webkit-slider-thumb { appearance: none; width: 4px; height: 8px; margin-top: -4px; background: #fff; border: 1px solid #444; }
```
